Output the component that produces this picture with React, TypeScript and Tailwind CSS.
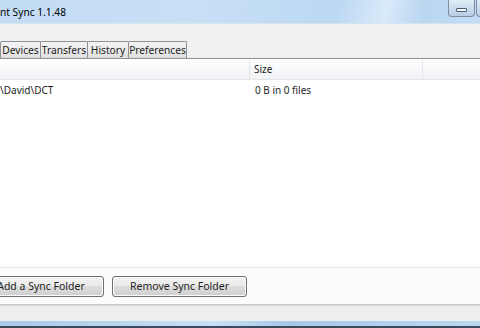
import React from "react";

export default function App() {
  const font = { fontFamily: '"Noto Sans", "Open Sans", sans-serif' };
  const btn =
    "w-[135px] h-[21px] border border-[#707070] rounded-[3px] bg-[linear-gradient(#f2f2f2,#ebebeb_45%,#dddddd_50%,#cfcfcf)] shadow-[inset_0_0_0_1px_#fcfcfc] text-[10.5px] leading-[19px] text-center text-[#1e1e1e]";
  return (
    <div
      className="w-[480px] h-[328px] overflow-hidden bg-[#f0f0f0] flex flex-col text-[10px] text-[#1e1e1e]"
      style={font}
    >
      {/* Title bar */}
      <div className="h-[24px] shrink-0 flex items-start bg-[linear-gradient(100deg,#c2dcf4_0%,#c8e0f6_40%,#bcd8f2_70%,#d9eafa_80%,#bad6f0_88%,#c4ddf4_100%)] border-b border-[#d6e4f0]">
        <span className="pt-[5px] leading-[15px] text-[10.2px] text-black">nt Sync 1.1.48</span>
        <div className="flex-1" />
        <div className="w-[27px] h-[17px] border border-t-0 border-[#7d8ea3] rounded-b-[4px] bg-[linear-gradient(#e4eef9,#cbdcee_50%,#b9cde4)] flex items-center justify-center">
          <div className="w-[11px] h-[4px] bg-white border border-[#4a5d75] rounded-[1px] mt-[3px]" />
        </div>
        <div className="w-[4px] h-[17px] ml-[1px] border border-t-0 border-r-0 border-[#7d8ea3] rounded-bl-[4px] bg-[linear-gradient(#e4eef9,#cbdcee_50%,#b9cde4)]" />
      </div>

      {/* gap above tabs */}
      <div className="h-[17px] shrink-0" />

      {/* Tabs */}
      <div className="h-[17px] shrink-0 flex items-stretch">
        {[
          ["Devices", "w-[41px]"],
          ["Transfers", "w-[48px]"],
          ["History", "w-[42px]"],
          ["Preferences", "w-[59px]"],
        ].map(([t, w]) => (
          <div
            key={t}
            className={`${w} -ml-px first:ml-0 border border-b-0 border-[#8e9199] rounded-t-[2px] bg-[linear-gradient(#f4f4f4,#ebebeb_50%,#dedede)] flex items-center justify-center leading-[15px] text-[10.2px]`}
          >
            {t}
          </div>
        ))}
      </div>

      {/* Panel top border */}
      <div className="h-px shrink-0 bg-[#8e9199]" />

      {/* List view */}
      <div className="flex-1 flex flex-col bg-white">
        <div className="h-[21px] shrink-0 flex bg-[linear-gradient(#ffffff,#f7f8fa_50%,#f1f2f4)] border-b border-[#e3e5e8]">
          <div className="w-[250px] border-r border-[#e4e6e9]" />
          <div className="w-[173px] border-r border-[#e4e6e9] pl-[4px] flex items-center pt-[1px]">Size</div>
          <div className="flex-1" />
        </div>
        <div className="h-[21px] shrink-0 flex items-center">
          <div className="w-[255px]">\David\DCT</div>
          <div>0 B in 0 files</div>
        </div>
        <div className="flex-1" />
        <div className="h-px bg-[#dde6ec]" />
      </div>

      {/* Buttons area */}
      <div className="h-[36px] shrink-0 bg-[#fcfcfc] flex items-start pt-[8px] gap-[8px]">
        <button className={`-ml-[31px] pl-[9px] ${btn}`} style={font}>Add a Sync Folder</button>
        <button className={btn} style={font}>Remove Sync Folder</button>
      </div>

      {/* Status bar */}
      <div className="h-[2px] shrink-0 bg-[linear-gradient(#c4c4c8,#d8d8dc)]" />
      <div className="h-[15px] shrink-0 bg-[#eeeeee]" />

      {/* Window bottom frame */}
      <div className="h-[5px] shrink-0 bg-[linear-gradient(90deg,#a9c9e8_0%,#c8e0f5_45%,#a8c8e8_60%,#bcd7f1_100%)]" />
      <div className="h-[2px] shrink-0 bg-[#3a4b5e]" />
    </div>
  );
}
